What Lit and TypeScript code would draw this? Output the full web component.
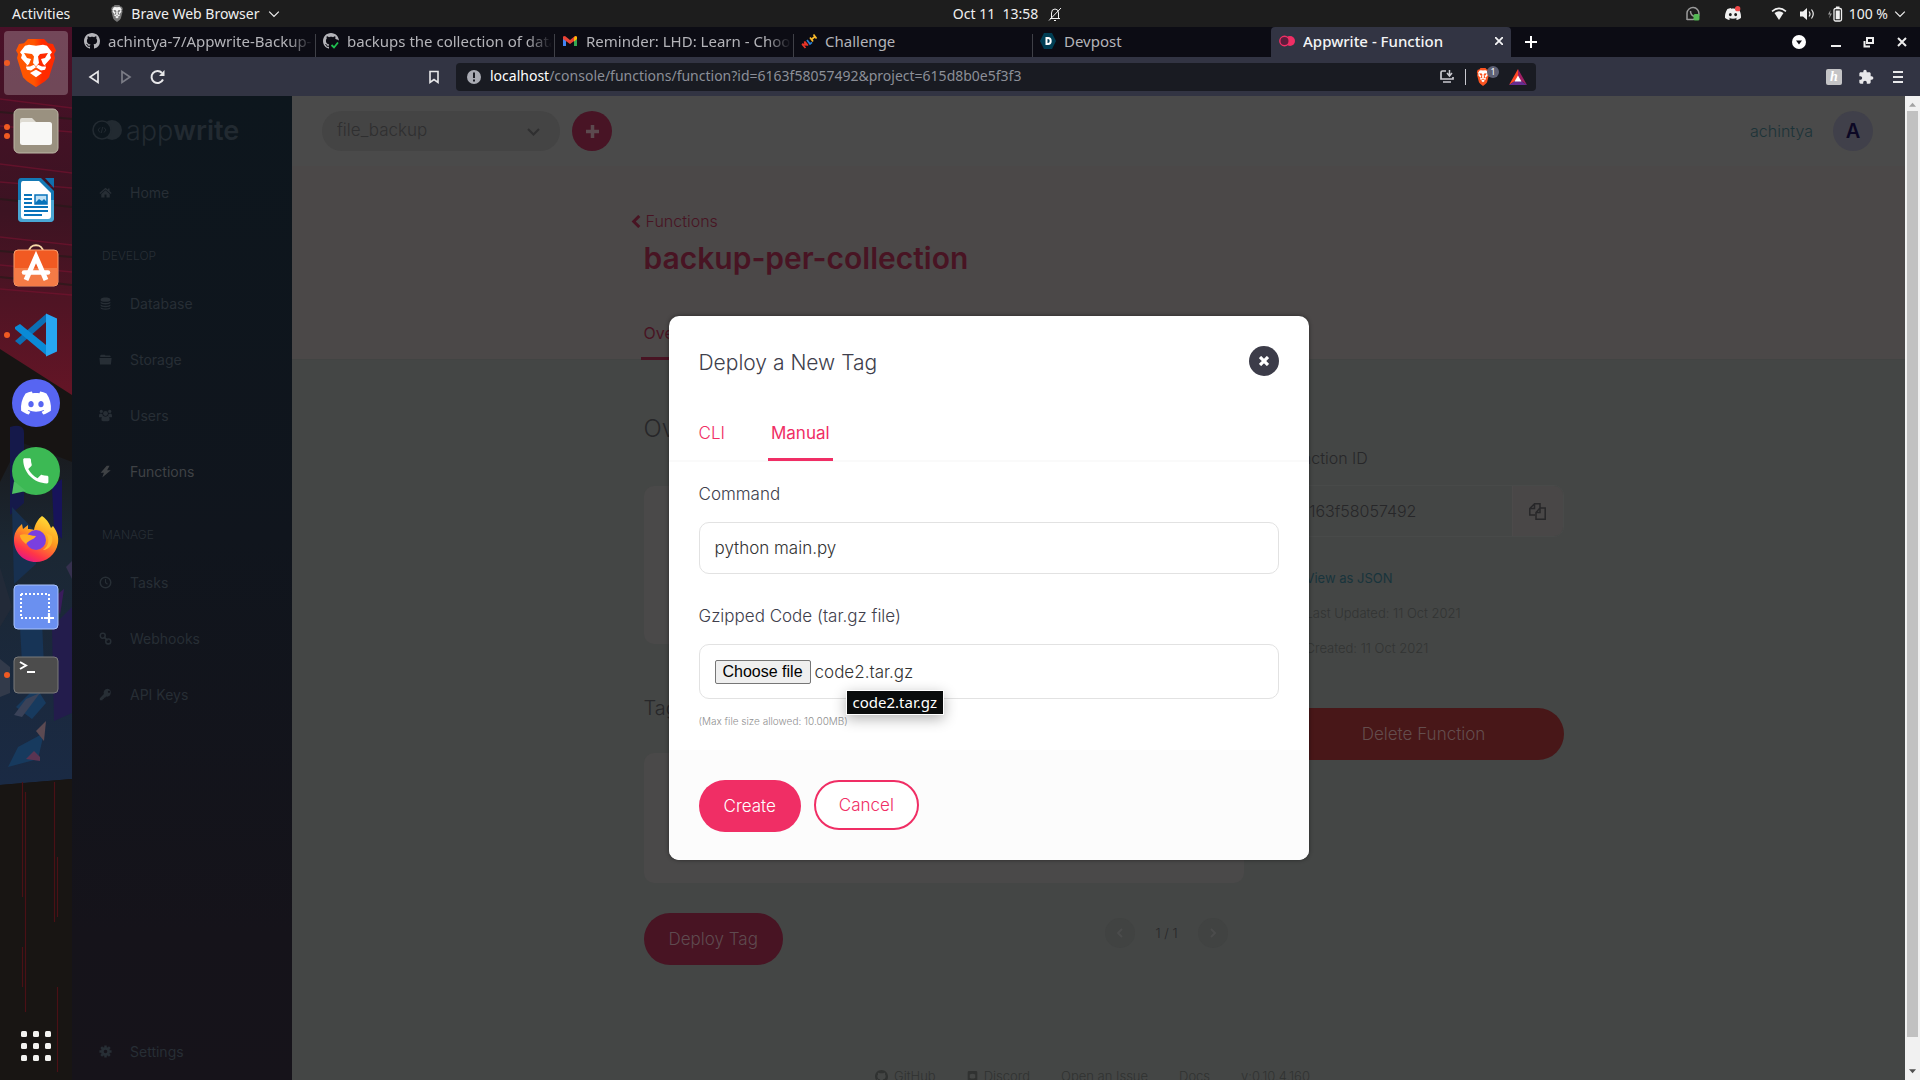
import { LitElement, html, svg, css, TemplateResult } from "lit";
import { customElement, property, state } from "lit/decorators.js";
import { classMap } from "lit/directives/class-map.js";

const icon = (size: number, box: string, body: TemplateResult, label = "") =>
  html`<svg width=${size} height=${size} viewBox=${box} fill="currentColor" aria-hidden=${label ? "false" : "true"} aria-label=${label}>${body}</svg>`;

const GITHUB = svg`<path d="M8 0C3.58 0 0 3.58 0 8c0 3.54 2.29 6.53 5.47 7.59.4.07.55-.17.55-.38 0-.19-.01-.82-.01-1.49-2.01.37-2.53-.49-2.69-.94-.09-.23-.48-.94-.82-1.13-.28-.15-.68-.52-.01-.53.63-.01 1.08.58 1.23.82.72 1.21 1.87.87 2.33.66.07-.52.28-.87.51-1.07-1.78-.2-3.64-.89-3.64-3.95 0-.87.31-1.59.82-2.15-.08-.2-.36-1.02.08-2.12 0 0 .67-.21 2.2.82.64-.18 1.32-.27 2-.27.68 0 1.36.09 2 .27 1.53-1.04 2.2-.82 2.2-.82.44 1.1.16 1.92.08 2.12.51.56.82 1.27.82 2.15 0 3.07-1.87 3.75-3.65 3.95.29.25.54.73.54 1.48 0 1.07-.01 1.93-.01 2.2 0 .21.15.46.55.38A8.013 8.013 0 0016 8c0-4.42-3.58-8-8-8z"/>`;
const DISCORD_PATH = "M20.317 4.3698a19.7913 19.7913 0 00-4.8851-1.5152.0741.0741 0 00-.0785.0371c-.211.3753-.4447.8648-.6083 1.2495-1.8447-.2762-3.68-.2762-5.4868 0-.1636-.3933-.4058-.8742-.6177-1.2495a.077.077 0 00-.0785-.037 19.7363 19.7363 0 00-4.8852 1.515.0699.0699 0 00-.0321.0277C.5334 9.0458-.319 13.5799.0992 18.0578a.0824.0824 0 00.0312.0561c2.0528 1.5076 4.0413 2.4228 5.9929 3.0294a.0777.0777 0 00.0842-.0276c.4616-.6304.8731-1.2952 1.226-1.9942a.076.076 0 00-.0416-.1057c-.6528-.2476-1.2743-.5495-1.8722-.8923a.077.077 0 01-.0076-.1277c.1258-.0943.2517-.1923.3718-.2914a.0743.0743 0 01.0776-.0105c3.9278 1.7933 8.18 1.7933 12.0614 0a.0739.0739 0 01.0785.0095c.1202.099.246.1981.3728.2924a.077.077 0 01-.0066.1276 12.2986 12.2986 0 01-1.873.8914.0766.0766 0 00-.0407.1067c.3604.698.7719 1.3628 1.225 1.9932a.076.076 0 00.0842.0286c1.961-.6067 3.9495-1.5219 6.0023-3.0294a.077.077 0 00.0313-.0552c.5004-5.177-.8382-9.6739-3.5485-13.6604a.061.061 0 00-.0312-.0286zM8.02 15.3312c-1.1825 0-2.1569-1.0857-2.1569-2.419 0-1.3332.9555-2.4189 2.157-2.4189 1.2108 0 2.1757 1.0952 2.1568 2.419 0 1.3332-.9555 2.4189-2.1569 2.4189zm7.9748 0c-1.1825 0-2.1569-1.0857-2.1569-2.419 0-1.3332.9554-2.4189 2.1569-2.4189 1.2108 0 2.1757 1.0952 2.1568 2.419 0 1.3332-.946 2.4189-2.1568 2.4189Z";
const PHONE_PATH = "M6.62 10.79c1.44 2.83 3.76 5.14 6.59 6.59l2.2-2.2c.27-.27.67-.36 1.02-.24 1.12.37 2.33.57 3.57.57.55 0 1 .45 1 1V20c0 .55-.45 1-1 1-9.39 0-17-7.61-17-17 0-.55.45-1 1-1h3.5c.55 0 1 .45 1 1 0 1.25.2 2.45.57 3.57.11.35.03.74-.25 1.02l-2.2 2.2z";

/* Lion shield, drawn in a 40 x 58 box */
const lion = (shield: string, face: string) => svg`
  <path fill=${shield} d="M12 0h16l4 5 5 1 3 8-2 4 1 5-6 23-4 5-9 7-9-7-4-5L1 23l1-5-2-4 3-8 5-1z"/>
  <path fill=${face} d="M20 8l7-1 4 1 5 8-2 3 1 4-6 8 1 3-1 3-4 1-5-4-5 4-4-1-1-3 1-3-6-8 1-4-2-3 5-8 4-1zM20 37l6 4-6 5-6-5z"/>
  <path fill=${shield} d="M8 17l8 1 2 3-1 8 3 4 3-4-1-8 2-3 8-1-3 6-4 1 2 6 3 3-4 0-4-2-2 3-2-3-4 2-4 0 3-3 2-6-4-1z"/>`;

const LOGO = svg`
  <circle cx="20" cy="10" r="10"/>
  <circle cx="10" cy="10" r="9" class="ring" stroke="currentColor" stroke-width="1.6"/>
  <path d="M8 7.500l-2 2.500 2 2.500M12 7.500l2 2.500-2 2.500M10.700 7l-1.400 6" fill="none" stroke="currentColor" stroke-width="1"/>`;

const NAV: Record<string, TemplateResult> = {
  home: svg`<path d="M8 2L0.500 8.500l1 1.200L8 4.200l6.500 5.500 1-1.200L13 6.300V3h-2v1.600zM8 5.300L2.800 9.700V14h4v-3.500h2.400V14h4V9.700z"/>`,
  database: svg`<path d="M2 3c0-3 12-3 12 0v1c0 2.500-12 2.500-12 0zM2 5.800c2 2 10 2 12 0V7.500c0 2.300-12 2.300-12 0zM2 9.200c2 2 10 2 12 0v1.700c0 2.300-12 2.300-12 0zM2 12.600c2 2 10 2 12 0v1c0 2.700-12 2.700-12 0z"/>`,
  storage: svg`<path d="M1.500 5V3l1-1H7l1 1.200h5.500l.8.800v1zM0.500 6h15l-.8 8H1.300z"/>`,
  users: svg`<circle cx="8" cy="5.500" r="3"/><circle cx="2.800" cy="3" r="2"/><circle cx="13.200" cy="3" r="2"/><path d="M0 8.500C0 6.500 1 5.500 2.500 5.600L4.300 6.500 5 8.800 2.800 10H0zM16 8.500c0-2-1-3-2.500-2.900l-1.800.9L11 8.800l2.200 1.200H16zM3 13c0-3 1-4.500 2.500-4.300 1.500 1 3.500 1 5 0C12 8.500 13 10 13 13c0 1.500-.8 2-2 2H5c-1.200 0-2-.5-2-2z"/>`,
  functions: svg`<path d="M9.500 1L2 9.500h4L4 15.500 14.500 6.500H10L13 1z"/>`,
  tasks: svg`<circle cx="8" cy="8" r="6.500" fill="none" stroke="currentColor" stroke-width="1.800"/><path d="M8 3.800V8l2.400 2.200" fill="none" stroke="currentColor" stroke-width="1.400"/>`,
  webhooks: svg`<g fill="none" stroke="currentColor" stroke-width="1.900"><rect x="1.600" y="1.600" width="6" height="6" rx="2.600"/><rect x="8.400" y="8.600" width="6" height="6" rx="2.600"/><path d="M6 6l4.500 4.500"/></g>`,
  keys: svg`<path d="M10.500 1A4.800 4.800 0 006 7.500L1 12.500V15h3.500v-1.500H6V12h1.500l1.300-1.500A4.800 4.800 0 1010.500 1zm1.800 2.300a1.400 1.400 0 11-.01 2.800 1.400 1.400 0 01.01-2.800z" fill-rule="evenodd"/>`,
  settings: svg`<circle cx="8" cy="8" r="3.900" fill="none" stroke="currentColor" stroke-width="3.400"/><g stroke="currentColor" stroke-width="3"><path d="M8 .500v3M8 12.500v3M.500 8h3M12.500 8h3M2.700 2.700l2 2M11.300 11.300l2 2M2.700 13.300l2-2M11.300 4.700l2-2"/></g>`,
};

const base = css`
  *, *::before, *::after { box-sizing: border-box; }
  button, input, select { font: inherit; color: inherit; margin: 0; }
  button { background: none; border: 0; padding: 0; cursor: pointer; display: flex; align-items: center; justify-content: center; }
  a { color: inherit; text-decoration: none; }
  svg { display: block; flex: none; }
  h1, h2, p, ul { margin: 0; padding: 0; font-weight: inherit; }
  ul { list-style: none; }
`;

@customElement("system-bar")
class SystemBar extends LitElement {
  static styles = [base, css`
    :host { display: grid; grid-template-columns: 1fr auto 1fr; align-items: center; height: 27px; padding: 0 14px 0 12px; background: #1d1d1d; color: #f0f0f0; font-size: 14px; }
    .group { display: flex; align-items: center; }
    .app { gap: 8px; margin-left: 41px; }
    .clock { gap: 10px; padding-left: 97px; white-space: pre; }
    .tray { justify-content: flex-end; gap: 12px; }
    .messengers { gap: 24px; margin-right: 18px; }
    .power { gap: 6px; }
  `];
  render() {
    return html`
      <div class="group">
        <button>Activities</button>
        <button class="group app">
          <svg width="12" height="17" viewBox="0 0 40 58">${lion("#777", "#f4f4f4")}</svg>
          Brave Web Browser
          ${icon(12, "0 0 10 10", svg`<path d="M1 3l4 4 4-4" fill="none" stroke="currentColor"/>`)}
        </button>
      </div>
      <button class="group clock">Oct 11  13:58${icon(14, "0 0 14 14", svg`<g fill="none" stroke="currentColor"><path d="M2 11.500h10M3.500 11V6a3.500 4 0 017 0v5M1 13.500L13 1M6 13.500h2"/></g>`)}</button>
      <div class="group tray">
        <div class="group messengers">
          ${icon(16, "0 0 16 16", svg`<path d="M2 14V7a6 6 0 116 6.500H2M5.500 5c0 3 2 5 4.500 5.500" fill="none" stroke="#9a9a9a" stroke-width="1.500"/><rect x="8.500" y="8" width="6" height="6.500" rx="1.500" fill="#55b855"/>`)}
          ${icon(16, "0 0 24 24", svg`<path d=${DISCORD_PATH}/><circle cx="19" cy="4" r="4" fill="#f04747"/>`)}
        </div>
        ${icon(16, "0 0 16 16", svg`<path d="M3.500 7Q8 3.500 12.500 7L8 14z"/><path d="M1 5.300Q8-.500 15 5.300" fill="none" stroke="currentColor" stroke-width="1.500"/>`)}
        ${icon(16, "0 0 16 16", svg`<path d="M1 5.500h3L8 2v12l-4-3.500H1z"/><path d="M10 5.500q2 2.500 0 5M12.500 3.500q3.500 4.500 0 9" fill="none" stroke="currentColor" stroke-width="1.200"/>`)}
        <button class="group power">
          ${icon(16, "0 0 16 16", svg`<path d="M3.500 4L1 8.500h2L2 12.500l3-5H3z" opacity=".6"/><rect x="7" y="2.500" width="7.500" height="12.500" rx="1.500" fill="none" stroke="currentColor" stroke-width="1.300"/><path d="M8.700 4.500h4.100v8.700H8.700zM9 0.500h3.500v2H9z"/>`)}
          100 %
          ${icon(12, "0 0 10 10", svg`<path d="M1 3l4 4 4-4" fill="none" stroke="currentColor"/>`)}
        </button>
      </div>`;
  }
}

interface DockApp { name: string; dots: number; art: TemplateResult; }

const DOCK: DockApp[] = [
  { name: "Brave", dots: 1, art: svg`<defs><linearGradient id="b"><stop offset=".45" stop-color="#ff5500"/><stop offset=".65" stop-color="#ff2a00"/></linearGradient></defs><g transform="translate(4)"><g transform="scale(1 .830)">${lion("url(#b)", "#fff")}</g></g>` },
  { name: "Files", dots: 2, art: svg`<rect x="2" y="2" width="44" height="44" rx="5" fill="#9a9180" stroke="#bdb7a6"/><path d="M8 13q0-2 2-2h10l4 4h-2v6H8z" fill="#dedbd2"/><rect x="8" y="15" width="32" height="23" rx="2.500" fill="#f8f8f6"/>` },
  { name: "Writer", dots: 0, art: svg`<path d="M9 3h20l13 13v27q0 4-4 4H10q-4 0-4-4V7q0-4 3-4z" fill="#1479b5"/><path d="M6 25h36v18q0 4-4 4H10q-4 0-4-4z" fill="#4aa6d4"/><path d="M11 6h16l12 12v23q0 3-3 3H12q-3 0-3-3V9q0-3 2-3z" fill="#fff"/><path d="M33 3h9v10z" fill="#0f6fae"/><path d="M12 20h8M12 24h8M12 28h8M12 32h24M12 36h24M12 40h18" stroke="#0873ba" stroke-width="2.200"/><rect x="23" y="20" width="12" height="9" fill="#bfe0f4" stroke="#0873ba" stroke-width="1.500"/><path d="M23 28l4-4 3 2 2-2 3 3v2H23z" fill="#0873ba"/>` },
  { name: "Software", dots: 0, art: svg`<path d="M17 9c0-9 14-9 14 0" fill="none" stroke="#f7d9a8" stroke-width="2"/><rect x="2" y="7" width="44" height="36" rx="4" fill="#f15a22" stroke="#f9a070"/><path d="M2.500 25h43v14q0 3.500-3.500 3.500H6q-3.500 0-3.500-3.500z" fill="#f47b46"/><g stroke="#fff" fill="none"><path d="M14 37L24 14l10 23" stroke-width="5"/><path d="M12 29.500h24" stroke-width="4.500" stroke-linecap="round"/></g>` },
  { name: "Code", dots: 1, art: svg`<path d="M3 30l5 4L34 11V3z" fill="#0b6fb5"/><path d="M3 16l5-3L34 34v10L3 18z" fill="#0a8ad6"/><path d="M34 2.500l11 5v33l-11 5z" fill="#27a6f2"/>` },
  { name: "Discord", dots: 0, art: svg`<circle cx="24" cy="24" r="24" fill="#5765f2"/><path transform="translate(9 9) scale(1.250)" fill="#fff" d=${DISCORD_PATH}/>` },
  { name: "WhatsApp", dots: 0, art: svg`<circle cx="24" cy="24" r="24" fill="#3cb954"/><path d="M2 34L0 47l14-3z" fill="#4cbf62"/><path transform="translate(7 7) scale(1.400)" fill="#fff" d=${PHONE_PATH}/>` },
  { name: "Firefox", dots: 0, art: svg`<defs><linearGradient id="f" x1=".8" y1="0" x2=".3" y2="1"><stop offset="0" stop-color="#ffe43a"/><stop offset=".45" stop-color="#ff9a1f"/><stop offset=".8" stop-color="#ff3647"/><stop offset="1" stop-color="#e31587"/></linearGradient></defs><path d="M30 1c6 4 8 9 9 12l2-2c4 5 6 11 5 17C44 40 34 47 24 47 11 47 2 37 2 25c0-6 2-11 8-16l1 5 5-4v4c2 0 4 0 6 1 1-6 4-11 8-14z" fill="url(#f)"/><circle cx="24" cy="25" r="10" fill="#7a3fe0"/><path d="M8 20c6-2 10 1 16 1-2 4-8 4-10 8-3-3-6-5-6-9z" fill="#ffae22"/><path d="M34 18c4 6 3 13-3 17 6 0 11-7 9-14z" fill="#ffb92e"/>` },
  { name: "Screenshot", dots: 0, art: svg`<rect x="2" y="2" width="44" height="44" rx="4" fill="#6a90f0" stroke="#a9c2fb"/><path d="M9 11h28v24M9 11v24h24" fill="none" stroke="#fff" stroke-width="2" stroke-dasharray="2 2"/><path d="M37 30v10M32 35h10" stroke="#fff" stroke-width="2.200"/>` },
  { name: "Terminal", dots: 1, art: svg`<rect x="2" y="6" width="44" height="36" rx="4" fill="#4c4c4c" stroke="#7b7b7b"/><path d="M8 11l6 3.500L8 18M15 21h8" fill="none" stroke="#fff" stroke-width="2"/>` },
];

@customElement("app-dock")
class AppDock extends LitElement {
  static styles = [base, css`
    :host { display: flex; flex-direction: column; justify-content: space-between; width: 72px; position: relative; background: #171413; overflow: hidden; }
    .wallpaper { position: absolute; inset: 0; width: 100%; height: 100%; }
    .apps { position: relative; padding-top: 2px; }
    .slot { height: 68px; display: grid; grid-template-columns: 12px 48px; align-items: center; }
    .active { position: relative; }
    .active::before { content: ""; position: absolute; inset: 2px 4px; border-radius: 4px; background: rgba(255, 255, 255, 0.23); }
    .dots { display: grid; gap: 3px; justify-items: center; position: relative; left: 1px; }
    .dot { width: 6px; height: 6px; border-radius: 50%; background: #f05a22; }
    .launch { position: relative; }
    .all { position: relative; align-self: center; margin-bottom: 19px; color: #f3f3f1; }
  `];
  render() {
    return html`
      <svg class="wallpaper" viewBox="0 0 72 1053" preserveAspectRatio="none" aria-hidden="true">
        <defs>
          <linearGradient id="w" x2="0" y2="1"><stop offset="0" stop-color="#4a1028"/><stop offset=".5" stop-color="#3c1322"/><stop offset="1" stop-color="#641526"/></linearGradient>
          <linearGradient id="s" x2="0" y2="1"><stop offset="0" stop-color="#191a1d"/><stop offset=".3" stop-color="#1b2733"/><stop offset="1" stop-color="#1a2a44"/></linearGradient>
        </defs>
        <path d="M0 0h72v368L0 322z" fill="url(#w)"/>
        <g stroke="#7a1230" stroke-width="1.500" opacity=".6" fill="none"><path d="M0 72l72 9M0 99l72 6M0 137l72 9M0 155l72 6M0 210l72 8M0 238l72 7M0 262l72 6"/></g>
        <g stroke="#221a18" stroke-width="2" opacity=".6" fill="none"><path d="M0 85l72 7M0 172l72 8M0 224l72 6M0 250l72 8"/></g>
        <path d="M0 455l20-40 52 20v317L0 758z" fill="url(#s)"/>
        <path d="M10 400q14-4 14 6v70l-14 12z" fill="#15194a"/>
        <path d="M12 480l24 25v32l-22 20z" fill="#173050"/>
        <path d="M52 460l10-8v60l-8-10z" fill="#17135a"/>
        <path d="M20 600l22-6 2 46-22-4z" fill="#173456"/>
        <path d="M8 740l10-20 26-14-6 26zM16 680l20-20 10 16-14 16z" fill="#173a5e"/>
        <path d="M52 600l20-20v106l-18 8z" fill="#231c4c"/>
        <path d="M54 570l10-8-4 26z" fill="#3a1c5c"/>
        <path d="M0 540l12 40-12 20z" fill="#222a38"/>
        <path d="M0 632l10 8v26l-10 4z" fill="#323a4a"/>
        <path d="M14 688l12-16 14-6-18 24z" fill="#3a4258"/>
        <path d="M36 704l10-10-2 20z" fill="#5c4a52"/>
        <path d="M26 732l8-8 6 6v4z" fill="#5a3452"/>
        <path d="M66 540l6-6v18z" fill="#35304e"/>
        <path d="M0 758l72-6v301H0z" fill="#181513"/>
        <g stroke="#4a1115" stroke-width="1.200"><path d="M22.500 755v115M22.500 920v40M25.500 765v220M54.500 755v140M57.500 830v60M57.500 960v85"/></g>
      </svg>
      <ul class="apps">
        ${DOCK.map((app, i) => html`
          <li class=${classMap({ slot: true, active: i === 0 })}>
            <span class="dots">${Array.from({ length: app.dots }, () => html`<i class="dot"></i>`)}</span>
            <button class="launch" aria-label=${app.name}>${icon(48, "0 0 48 48", app.art)}</button>
          </li>`)}
      </ul>
      <button class="all" aria-label="Show applications">
        ${icon(30, "0 0 30 30", svg`${[0, 12, 24].map((y) => [0, 12, 24].map((x) => svg`<rect x=${x} y=${y} width="6" height="6" rx="1.500"/>`))}`)}
      </button>`;
  }
}

@customElement("browser-chrome")
class BrowserChrome extends LitElement {
  static styles = [base, css`
    :host { display: block; background: #0c0c14; color: #b4b4b9; font-size: 15px; }
    .strip { display: flex; height: 30px; padding: 0 10px 0 4px; }
    .tab { flex: 0 1 239px; min-width: 0; display: flex; align-items: center; gap: 8px; padding: 0 2px 2px 8px; position: relative; }
    .tab + .tab:not(.current)::before { content: ""; position: absolute; left: 0; top: 7px; bottom: 0; width: 1px; background: #3f4047; }
    .title { flex: 1; min-width: 0; overflow: hidden; white-space: nowrap; text-align: left; }
    .fade { -webkit-mask-image: linear-gradient(90deg, #000 88%, transparent); mask-image: linear-gradient(90deg, #000 88%, transparent); }
    .current { flex-basis: 240px; padding-right: 8px; background: #323443; border-radius: 4px 4px 0 0; color: #f4f4f6; font-weight: 500; }
    .add { width: 40px; color: #fff; }
    .window { margin-left: auto; display: flex; align-items: center; gap: 17px; color: #eee; }
    .search { margin-right: 5px; }
    .bar { display: flex; align-items: center; height: 39px; padding: 0 14px; background: #323443; color: #e8e8ea; }
    .history { display: flex; gap: 16px; flex: 1 1 340px; }
    .dim { opacity: 0.4; }
    .address { flex: 0 1 1080px; display: flex; align-items: center; gap: 8px; height: 28px; margin-left: 14px; padding: 0 9px 0 10px; border-radius: 4px; background: #191b22; }
    .url { flex: 1; min-width: 0; padding-bottom: 2px; white-space: nowrap; overflow: hidden; font-size: 14px; color: #8c8f98; }
    .host { color: #fff; }
    .tools { display: flex; align-items: center; gap: 10px; }
    .rule { width: 1px; height: 16px; background: #c9c9cf; }
    .shield { position: relative; padding-right: 9px; }
    .count { position: absolute; right: 0; top: -2px; min-width: 12px; height: 12px; border-radius: 6px; background: #5e6175; color: #fff; font-size: 9px; line-height: 12px; text-align: center; }
    .extensions { display: flex; align-items: center; justify-content: flex-end; gap: 16px; flex: 0 0 370px; }
    .honey { width: 16px; height: 16px; border-radius: 2px; background: #c4c4c6; color: #fff; font: italic 700 14px "Liberation Serif", serif; }
  `];
  render() {
    const tabs = [
      { title: "achintya-7/Appwrite-Backup-t", fade: true, art: GITHUB },
      { title: "backups the collection of data", fade: true, art: svg`${GITHUB}<circle cx="12" cy="12" r="6" fill="#0c0c14"/><path d="M8.500 12l2.500 2.500L15 9.500" fill="none" stroke="#20c050" stroke-width="1.800"/>` },
      { title: "Reminder: LHD: Learn - Choos", fade: true, art: svg`<path d="M1 4v9h3V6z" fill="#4285f4"/><path d="M15 4v9h-3V6z" fill="#34a853"/><path d="M1 3.500L3 3l5 4 5-4 2 .5V6l-7 5-7-5z" fill="#ea4335"/><path d="M12 4.500l1.500-1.500 1.500 1V6l-3 2.500z" fill="#fbbc04"/>` },
      { title: "Challenge", art: svg`<g fill="none" stroke-width="1.700"><path d="M1 11l3.500 4M1 11l3.500.8L3.500 8.500 7 12.500" stroke="#e73427"/><path d="M6 7l3 4 2-1.600" stroke="#2a7fd0"/><path d="M9 4.500l3 4M12.500 1.500l3 4M10.500 6.500l3.500-3" stroke="#f8b92a"/></g>` },
      { title: "Devpost", art: svg`<path d="M4 0h8l4 8-4 8H4L0 8z" fill="#003e54"/><path d="M6.500 5v6H8q2.700 0 2.700-3T8 5z" fill="none" stroke="#fff" stroke-width="2"/>` },
    ];
    return html`
      <div class="strip">
        ${tabs.map((t) => html`<button class="tab">${icon(16, "0 0 16 16", t.art)}<span class=${classMap({ title: true, fade: !!t.fade })}>${t.title}</span></button>`)}
        <div class="tab current">
          ${icon(16, "0 0 16 16", svg`<circle cx="11" cy="8" r="5" fill="#f02e65"/><circle cx="5.500" cy="8" r="4.700" fill="#5d1c3c" stroke="#f02e65" stroke-width="1.400"/>`)}
          <span class="title">Appwrite - Function</span>
          <button aria-label="Close tab">${icon(8, "0 0 8 8", svg`<path d="M0 0l8 8M8 0L0 8" stroke="currentColor" stroke-width="1.800"/>`)}</button>
        </div>
        <button class="add" aria-label="New tab">${icon(12, "0 0 12 12", svg`<path d="M6 0v12M0 6h12" stroke="currentColor" stroke-width="2"/>`)}</button>
        <div class="window">
          <button class="search" aria-label="Search tabs">${icon(14, "0 0 14 14", svg`<circle cx="7" cy="7" r="7" fill="#fff"/><path d="M4 5.500h6L7 9.500z" fill="#0c0c14"/>`)}</button>
          <button aria-label="Minimise">${icon(16, "0 0 16 16", svg`<path d="M3 11h10v2H3z"/>`)}</button>
          <button aria-label="Restore">${icon(16, "0 0 16 16", svg`<path d="M6 4h6v5H6zM3.500 7v5.500H9" fill="none" stroke="currentColor" stroke-width="2"/>`)}</button>
          <button aria-label="Close window">${icon(16, "0 0 16 16", svg`<path d="M4 4l8 8M12 4l-8 8" stroke="currentColor" stroke-width="2"/>`)}</button>
        </div>
      </div>
      <div class="bar">
        <div class="history">
          <button aria-label="Back">${icon(16, "0 0 16 16", svg`<path d="M12 2.500v11L4 8z" fill="none" stroke="currentColor" stroke-width="1.700"/>`)}</button>
          <button class="dim" aria-label="Forward">${icon(16, "0 0 16 16", svg`<path d="M4 2.500v11L12 8z" fill="none" stroke="currentColor" stroke-width="1.700"/>`)}</button>
          <button aria-label="Reload">${icon(16, "0 0 16 16", svg`<path d="M13 10.500A6 6 0 1112 4" fill="none" stroke="currentColor" stroke-width="2"/><path d="M14.500 1v6H9z"/>`)}</button>
        </div>
        <button aria-label="Bookmark">${icon(16, "0 0 16 16", svg`<path d="M4 2.500h8v11L8 10.500 4 13.500z" fill="none" stroke="currentColor" stroke-width="1.600"/>`)}</button>
        <div class="address">
          ${icon(16, "0 0 16 16", svg`<circle cx="8" cy="8" r="7" fill="#a9abb3"/><path d="M7 3.500h2v5.500H7zM7 10.500h2v2H7z" fill="#191b22"/>`)}
          <span class="url"><span class="host">localhost</span>/console/functions/function?id=6163f58057492&amp;project=615d8b0e5f3f3</span>
          <div class="tools">
            <button aria-label="Install">${icon(16, "0 0 16 16", svg`<path d="M7 2H3.500Q2 2 2 3.500V10h12V8M4 13h8" fill="none" stroke="#c9c9cf" stroke-width="1.700"/><path d="M10.500 1v5M8 4l2.500 3L13 4" fill="none" stroke="#c9c9cf" stroke-width="1.500"/>`)}</button>
            <i class="rule"></i>
            <button class="shield" aria-label="Shields"><svg width="14" height="18" viewBox="0 0 40 58">${lion("#fb5420", "#fff")}</svg><span class="count">1</span></button>
            <button aria-label="Rewards">${icon(18, "0 0 18 16", svg`<path d="M9 0L0 16l9-6z" fill="#ff4724"/><path d="M9 0v10l9 6z" fill="#9e1f63"/><path d="M0 16h18l-9-6z" fill="#662d91"/><path d="M9 6.500l3.500 6h-7z" fill="#fff"/>`)}</button>
          </div>
        </div>
        <div class="extensions">
          <button class="honey" aria-label="Honey">h</button>
          <button aria-label="Extensions">${icon(16, "0 0 24 24", svg`<path d="M20.500 11H19V7c0-1.100-.9-2-2-2h-4V3.500C13 2.120 11.880 1 10.500 1S8 2.120 8 3.500V5H4c-1.100 0-1.990.9-1.990 2v3.800H3.500c1.490 0 2.700 1.210 2.700 2.700s-1.210 2.700-2.700 2.700H2V20c0 1.100.9 2 2 2h3.800v-1.500c0-1.490 1.210-2.700 2.700-2.700 1.490 0 2.700 1.210 2.700 2.700V22H17c1.100 0 2-.9 2-2v-4h1.500c1.380 0 2.500-1.120 2.500-2.500S21.880 11 20.500 11z"/>`)}</button>
          <button aria-label="Menu">${icon(16, "0 0 16 16", svg`<path d="M3 3h10M3 8h10M3 13h10" stroke="currentColor" stroke-width="2"/>`)}</button>
        </div>
      </div>`;
  }
}

@customElement("side-nav")
class SideNav extends LitElement {
  static styles = [base, css`
    :host { display: flex; flex-direction: column; width: 220px; background: linear-gradient(#0d161d, #10151d 45%, #15131a 85%, #16131a); color: #272e35; font-size: 14px; }
    .logo { display: flex; align-items: center; gap: 4px; height: 68px; padding: 0 20px; font-size: 27px; color: #222a31; }
    .ring { fill: #0d161d; }
    .thin { font-weight: 300; }
    .bold { font-weight: 600; }
    .item { display: flex; align-items: center; gap: 18px; height: 56px; padding: 0 27px; }
    .item svg { width: 13px; height: 13px; }
    .current { color: #3f4245; }
    .heading { height: 55px; padding: 27px 30px 0; font-size: 12px; line-height: 18px; font-weight: 300; }
    .last { margin-top: auto; margin-bottom: 1px; }
  `];
  private item(key: string, label: string, extra = "") {
    return html`<a href="#" class="item ${extra}">${icon(14, "0 0 16 16", NAV[key])}${label}</a>`;
  }
  render() {
    return html`
      <a href="#" class="logo"><svg width="30" height="20" viewBox="0 0 30 20" fill="currentColor" aria-hidden="true">${LOGO}</svg><span><span class="thin">app</span><span class="bold">write</span></span></a>
      ${this.item("home", "Home")}
      <h2 class="heading">DEVELOP</h2>
      ${this.item("database", "Database")} ${this.item("storage", "Storage")} ${this.item("users", "Users")}
      ${this.item("functions", "Functions", "current")}
      <h2 class="heading">MANAGE</h2>
      ${this.item("tasks", "Tasks")} ${this.item("webhooks", "Webhooks")} ${this.item("keys", "API Keys")}
      ${this.item("settings", "Settings", "last")}`;
  }
}

@customElement("function-page")
class FunctionPage extends LitElement {
  static styles = [base, css`
    :host { display: block; min-width: 0; overflow: hidden; background: #444645; color: #272729; font-size: 16px; font-weight: 300; }
    .top { display: flex; align-items: center; gap: 12px; height: 70px; padding: 0 32px 0 30px; background: #4a4a4a; }
    .picker { position: relative; display: flex; align-items: center; color: #2f2f30; }
    .select { appearance: none; width: 238px; height: 40px; padding: 0 15px 2px; border: 0; border-radius: 20px; background: #444444; font-size: 17px; }
    .caret { position: absolute; right: 20px; pointer-events: none; }
    .plus { width: 40px; height: 40px; border-radius: 50%; background: #481425; color: #5c4a4f; }
    .user { margin-left: auto; color: #1c3338; }
    .avatar { width: 40px; height: 40px; margin-left: 8px; border-radius: 50%; background: #40404a; color: #0c0824; font-size: 20px; font-weight: 600; display: grid; place-items: center; }
    .cover { height: 194px; padding-top: 43px; background: #4b4848; border-bottom: 1px solid #424443; color: #481423; }
    .wrap { width: 920px; max-width: 100%; margin: 0 auto; position: relative; left: 5px; }
    .back { display: flex; align-items: center; gap: 3px; margin-left: -14px; line-height: 24px; }
    .name { font-size: 30px; line-height: 44px; font-weight: 600; margin-top: 3px; }
    .tabs { margin-top: 41px; display: flex; }
    .tab { height: 39px; padding: 0 3px; margin-left: -3px; align-items: flex-start; line-height: 24px; border-bottom: 3px solid #481423; font-weight: 400; }
    .columns { display: grid; grid-template-columns: minmax(0, 1fr) 280px; gap: 40px; padding-top: 50px; }
    .big { font-size: 24px; line-height: 38px; }
    .mid { font-size: 20px; line-height: 30px; margin-top: 49px; }
    .card { border-radius: 10px; background: #4a4949; }
    .usage { height: 158px; margin-top: 38px; }
    .list { height: 130px; margin-top: 30px; }
    .actions { display: flex; align-items: flex-start; justify-content: space-between; margin-top: 30px; padding-right: 16px; }
    .deploy { height: 52px; padding: 0 25px; border-radius: 26px; background: #481423; color: #5f4b50; font-size: 17px; }
    .pager { display: flex; align-items: center; gap: 20px; margin-top: 5px; font-size: 13px; }
    .step { width: 30px; height: 30px; border-radius: 50%; background: #414342; color: #4b4c4c; }
    .side { font-size: 13px; padding-top: 36px; }
    .label { display: block; font-size: 16px; line-height: 24px; }
    .copy { display: flex; height: 52px; margin: 15px 0 27px; border: 1px solid #484a49; border-radius: 10px; overflow: hidden; }
    .id { flex: 1; min-width: 0; border: 0; padding: 0 15px; background: none; font-size: 16px; }
    .clip { width: 51px; background: #494747; border-left: 1px solid #4c4a4a; }
    .json { display: block; padding-left: 22px; line-height: 28px; color: #18343c; font-weight: 400; }
    .meta { padding-left: 22px; line-height: 28px; margin-top: 7px; color: #323433; }
    .delete { width: 100%; height: 52px; margin-top: 46px; border-radius: 26px; background: #481718; color: #644d4d; font-size: 17px; }
    .foot { display: flex; justify-content: center; gap: 31px; margin-top: 99px; padding-right: 12px; font-size: 13px; line-height: 24px; color: #303231; }
    .foot a { display: flex; align-items: center; gap: 6px; }
  `];
  render() {
    return html`
      <div class="top">
        <div class="picker">
          <select class="select" aria-label="Project"><option>file_backup</option></select>
          <span class="caret">${icon(13, "0 0 13 13", svg`<path d="M1 4l5.500 5.500L12 4" fill="none" stroke="currentColor" stroke-width="2"/>`)}</span>
        </div>
        <button class="plus" aria-label="Add project">${icon(13, "0 0 13 13", svg`<path d="M6.500 0v13M0 6.500h13" stroke="currentColor" stroke-width="3.500"/>`)}</button>
        <a href="#" class="user">achintya</a>
        <span class="avatar">A</span>
      </div>
      <div class="cover">
        <div class="wrap">
          <a href="#" class="back">${icon(13, "0 0 13 14", svg`<path d="M9.500 1L3.500 7l6 6" fill="none" stroke="currentColor" stroke-width="3.200"/>`)}Functions</a>
          <h1 class="name">backup-per-collection</h1>
          <div class="tabs"><button class="tab">Overview</button></div>
        </div>
      </div>
      <div class="wrap columns">
        <div>
          <h2 class="big">Overview</h2>
          <div class="card usage"></div>
          <h2 class="mid">Tags</h2>
          <div class="card list"></div>
          <div class="actions">
            <button class="deploy">Deploy Tag</button>
            <div class="pager">
              <button class="step" aria-label="Previous">${icon(12, "0 0 12 12", svg`<path d="M8 2L4 6l4 4" fill="none" stroke="currentColor" stroke-width="2"/>`)}</button>
              <span>1 / 1</span>
              <button class="step" aria-label="Next">${icon(12, "0 0 12 12", svg`<path d="M4 2l4 4-4 4" fill="none" stroke="currentColor" stroke-width="2"/>`)}</button>
            </div>
          </div>
        </div>
        <div class="side">
          <label class="label" for="fid">Function ID</label>
          <div class="copy">
            <input class="id" id="fid" readonly .value=${"6163f58057492"} />
            <button class="clip" aria-label="Copy">${icon(17, "0 0 17 17", svg`<path d="M5.500.800H11V5M6 12H.800V5.500L5.500.800V5.500H.800M11 5h5.200v11.200H7V9.500L11 5v4.500H7" fill="none" stroke="currentColor" stroke-width="1.500"/>`)}</button>
          </div>
          <a href="#" class="json">View as JSON</a>
          <p class="meta">Last Updated: 11 Oct 2021</p>
          <p class="meta">Created: 11 Oct 2021</p>
          <button class="delete">Delete Function</button>
        </div>
      </div>
      <div class="foot">
        <a href="#">${icon(13, "0 0 16 16", GITHUB)}GitHub</a>
        <a href="#">${icon(11, "0 0 16 16", svg`<path fill-rule="evenodd" d="M3 0h10q2 0 2 2v14l-3-2H3q-2 0-2-2V2q0-2 2-2zm1 5v5q4 2 8 0V5Q8 3 4 5z"/>`)}Discord</a>
        <a href="#">Open an Issue</a>
        <a href="#">Docs</a>
        <span>v:0.10.4.160</span>
      </div>`;
  }
}

@customElement("deploy-dialog")
class DeployDialog extends LitElement {
  @property({ attribute: "file-name" }) fileName = "code2.tar.gz";
  @state() private mode = "Manual";
  static styles = [base, css`
    :host { display: block; width: 640px; max-width: 100%; border-radius: 10px; overflow: hidden; background: #fff; color: #40404c; font-size: 17px; font-weight: 300; box-shadow: 0 0 4px rgba(0, 0, 0, 0.45); }
    .head { display: flex; align-items: flex-start; justify-content: space-between; padding: 30px 30px 0; height: 90px; }
    .title { font-size: 21px; line-height: 34px; }
    .close { width: 30px; height: 30px; border-radius: 50%; background: #3c3c49; color: #fff; }
    .tabs { display: flex; gap: 40px; height: 56px; padding: 0 27px; border-bottom: 2px solid #fafafa; color: #f02e65; }
    .tab { align-items: flex-start; padding: 15px 3px 0; line-height: 24px; border-bottom: 3px solid transparent; height: 55px; }
    .on { border-color: #f02e65; font-weight: 400; }
    .body { padding: 20px 30px 17px; }
    .label { display: block; line-height: 24px; }
    .field { display: flex; align-items: center; gap: 4px; width: 100%; height: 52px; margin: 16px 0 30px; padding: 0 15px; border: 1px solid #e2e2e2; border-radius: 10px; background: #fff; color: #333; font-weight: 300; }
    .file { height: 55px; margin-bottom: 10px; position: relative; }
    .native { position: absolute; width: 1px; height: 1px; opacity: 0; }
    .choose { height: 24px; padding: 0 7px; border: 1px solid #767676; border-radius: 2px; background: #efefef; color: #000; font: 400 16px/21px "Liberation Sans", sans-serif; }
    .tip { position: absolute; left: 146px; top: 45px; height: 25px; padding: 0 6px; background: #0a0c0c; border: 1px solid #fff; color: #fff; font: 400 15px/22px "Noto Sans", sans-serif; box-shadow: 0 4px 14px rgba(0, 0, 0, 0.3); z-index: 1; }
    .hint { font-size: 10px; line-height: 24px; color: #909090; }
    .foot { display: flex; gap: 13px; padding: 30px 30px 28px; background: #fcfcfc; }
    .go { height: 52px; padding: 0 25px; border-radius: 26px; background: #f02e65; color: #fff; }
    .cancel { height: 50px; padding: 0 23px; border: 2px solid #f02e65; border-radius: 26px; color: #f02e65; background: #fff; }
  `];
  render() {
    return html`
      <div class="head">
        <h1 class="title">Deploy a New Tag</h1>
        <button class="close" aria-label="Close">${icon(10, "0 0 10 10", svg`<path d="M1 1l8 8M9 1L1 9" stroke="currentColor" stroke-width="3.200"/>`)}</button>
      </div>
      <div class="tabs">
        ${["CLI", "Manual"].map((t) => html`<button class=${classMap({ tab: true, on: t === this.mode })} @click=${() => (this.mode = t)}>${t}</button>`)}
      </div>
      <div class="body">
        <label class="label" for="command">Command</label>
        <input class="field" id="command" .value=${"python main.py"} />
        <span class="label">Gzipped Code (tar.gz file)</span>
        <div class="field file">
          <input class="native" id="code" type="file" />
          <label class="choose" for="code">Choose file</label>
          <span>${this.fileName}</span>
          <span class="tip" role="tooltip">${this.fileName}</span>
        </div>
        <p class="hint">(Max file size allowed: 10.00MB)</p>
      </div>
      <div class="foot">
        <button class="go">Create</button>
        <button class="cancel">Cancel</button>
      </div>`;
  }
}

@customElement("app-root")
class AppRoot extends LitElement {
  static styles = [base, css`
    :host { display: grid; grid-template-rows: auto minmax(0, 1fr); height: 100vh; overflow: hidden; font-family: "Noto Sans", "Open Sans", sans-serif; }
    .desktop { display: grid; grid-template-columns: auto minmax(0, 1fr); min-height: 0; }
    .browser { display: grid; grid-template-rows: auto minmax(0, 1fr); min-height: 0; }
    .view { position: relative; display: grid; grid-template-columns: auto minmax(0, 1fr) 15px; min-height: 0; font-family: Inter, Lato, sans-serif; }
    .scroll { display: flex; flex-direction: column; align-items: center; justify-content: space-between; background: #f1f1f1; color: #a3a3a3; padding: 5px 0; }
    .thumb { flex: 1; width: 11px; margin: 3px 0 31px; background: #c1c1c1; }
    .overlay { position: absolute; inset: 0 15px 0 0; display: flex; align-items: center; justify-content: center; }
  `];
  render() {
    return html`
      <system-bar></system-bar>
      <div class="desktop">
        <app-dock></app-dock>
        <div class="browser">
          <browser-chrome></browser-chrome>
          <div class="view">
            <side-nav></side-nav>
            <function-page></function-page>
            <div class="scroll">
              ${icon(7, "0 0 8 6", svg`<path d="M0 5.500L4 1l4 4.500z"/>`)}
              <i class="thumb"></i>
              ${icon(7, "0 0 8 6", svg`<path d="M0 .500L4 5l4-4.500z" fill="#505050"/>`)}
            </div>
            <div class="overlay"><deploy-dialog></deploy-dialog></div>
          </div>
        </div>
      </div>`;
  }
}
